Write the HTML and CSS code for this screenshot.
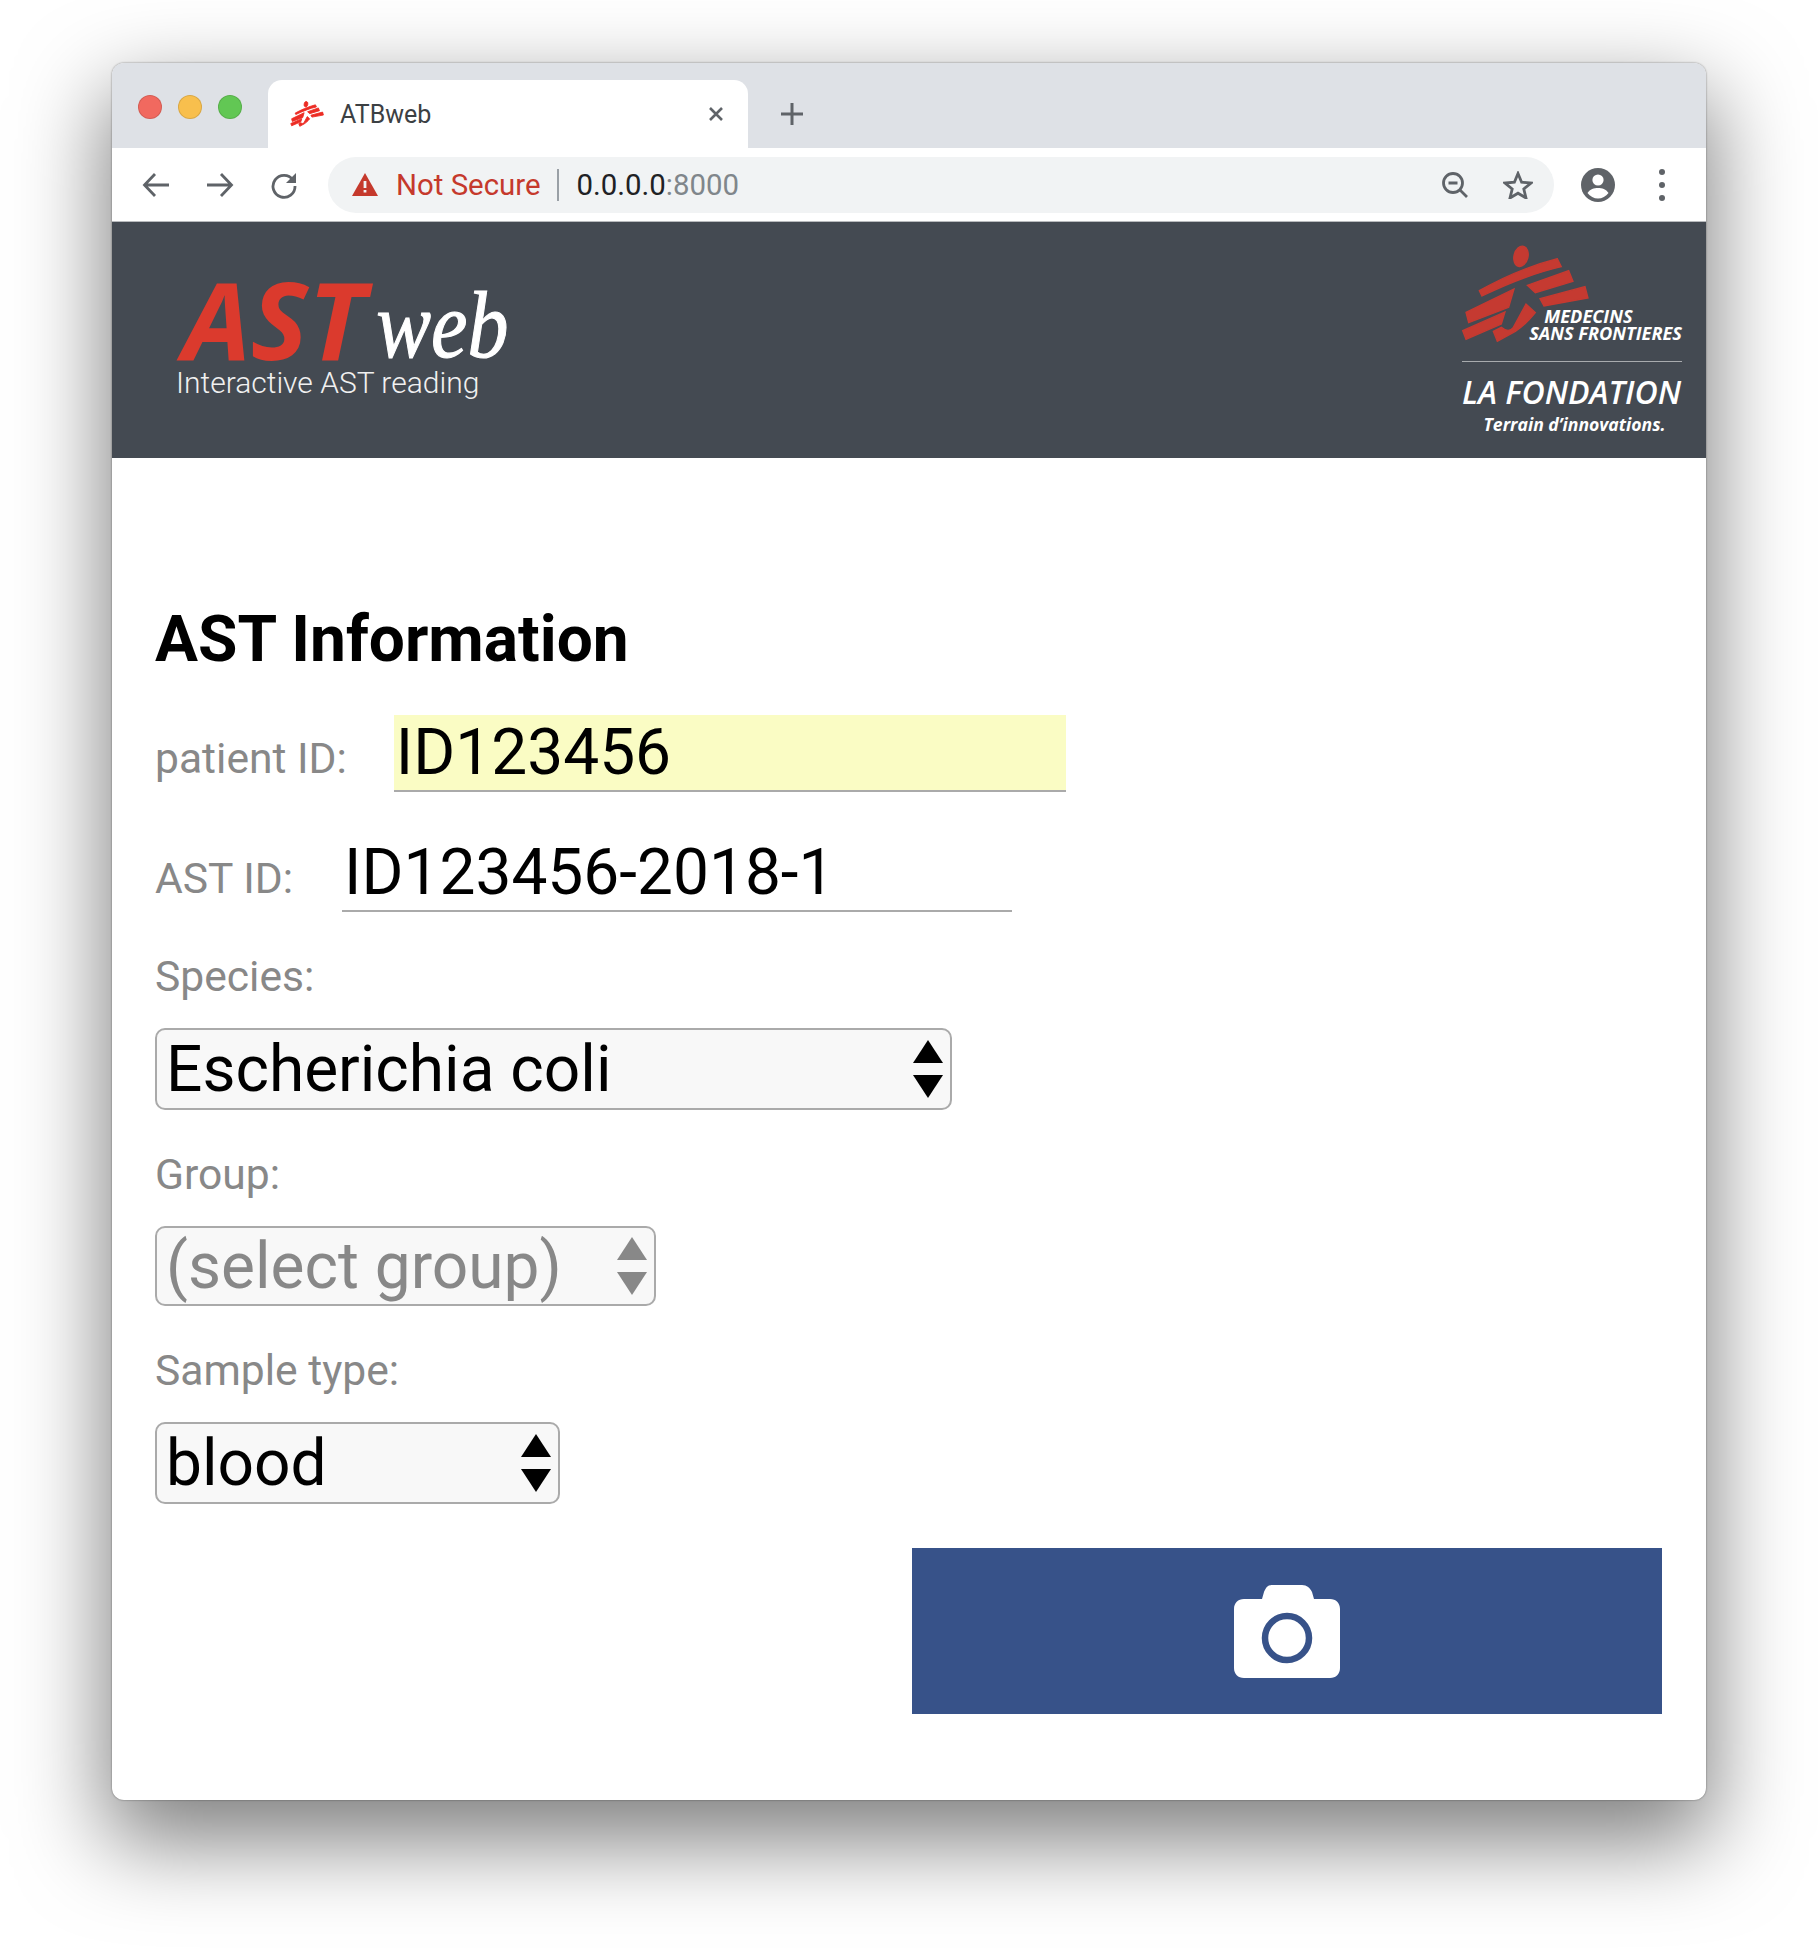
FILE: index.html
```html
<!DOCTYPE html>
<html lang="en">
<head>
    <meta charset="UTF-8">
    <title>ATBweb</title>
    <link rel="stylesheet" href="styles.css">
</head>
<body>
    <svg class="defs" width="0" height="0">
        <symbol id="msf-man" viewBox="60 60 390 300">
            <ellipse cx="243" cy="97" rx="21" ry="31" transform="rotate(14 243 97)"/>
            <path d="M118 200C180 165 270 125 352 104L364 128C290 145 200 180 126 216Z"/>
            <path d="M262 184L386 140L399 172L286 206Z"/>
            <path d="M78 265L222 195L206 250L86 296Z"/>
            <path d="M300 224L435 188L444 222L312 246Z"/>
            <path d="M68 320L195 264L184 300L78 346Z"/>
            <path d="M160 322L184 310C198 322 212 322 220 310L258 240L286 266C262 296 242 312 226 322L172 352Z"/>
        </symbol>
    </svg>

    <div class="window">
        <!-- Tabs -->
        <div class="tabbar">
            <div class="lights">
                <span class="light red"></span>
                <span class="light yellow"></span>
                <span class="light green"></span>
            </div>
            <div class="tab">
                <svg class="favicon"><use href="#msf-man"/></svg>
                <span class="tab-title">ATBweb</span>
                <svg class="tab-close" viewBox="0 0 16 16"><path d="M2 2L14 14M14 2L2 14"/></svg>
            </div>
            <svg class="tab-new" viewBox="0 0 24 24"><path d="M12 1V23M1 12H23"/></svg>
        </div>

        <!-- Toolbar -->
        <div class="toolbar">
            <svg class="tool" viewBox="0 0 28 28"><path d="M27 14H3M13 3L2.5 14L13 25"/></svg>
            <svg class="tool" viewBox="0 0 28 28"><path d="M1 14H25M15 3L25.5 14L15 25"/></svg>
            <svg class="tool" viewBox="0 0 28 28"><path d="M23 9A11 11 0 1 0 25 15"/><path class="solid" d="M26 2V12H16Z"/></svg>
            <div class="omnibox">
                <svg class="warn" viewBox="0 0 26 23"><path d="M13 0L26 23H0Z"/><path class="mark" d="M11.6 8H14.4V15H11.6ZM11.6 17H14.4V19.6H11.6Z"/></svg>
                <span class="not-secure">Not Secure</span>
                <span class="omni-sep"></span>
                <span class="url">0.0.0.0<span class="port">:8000</span></span>
                <svg class="tool zoom-out" viewBox="0 0 28 28"><circle cx="12" cy="12" r="9.5"/><path d="M19 19L26 26M7.5 12H16.5"/></svg>
                <svg class="tool star" viewBox="0 0 30 28"><path d="M15 2.5L18.6 11.2L28 12L20.8 18L23 27L15 22.2L7 27L9.2 18L2 12L11.4 11.2Z"/></svg>
            </div>
            <svg class="account" viewBox="0 0 34 34">
                <circle cx="17" cy="17" r="17"/>
                <circle class="cut" cx="17" cy="12" r="5.6"/>
                <path class="cut" d="M6.5 25C9 21 13 20 17 20S25 21 27.5 25C25 28.5 21 30.5 17 30.5S9 28.5 6.5 25Z"/>
            </svg>
            <div class="menu-dots"><span></span><span></span><span></span></div>
        </div>

        <!-- Encabezado -->
        <header class="site-header">
            <div class="brand">
                <div class="brand-name"><span class="brand-ast">AST</span><span class="brand-web">web</span></div>
                <div class="brand-sub">Interactive AST reading</div>
            </div>
            <div class="msf">
                <div class="msf-top">
                    <svg class="msf-man"><use href="#msf-man"/></svg>
                    <div class="msf-name">
                        <span class="msf-line1">MEDECINS</span>
                        <span class="msf-line2">SANS FRONTIERES</span>
                    </div>
                </div>
                <div class="msf-rule"></div>
                <div class="msf-fond">LA FONDATION</div>
                <div class="msf-tag">Terrain d’innovations.</div>
            </div>
        </header>

        <!-- Formulario -->
        <main class="content">
            <h1>AST Information</h1>

            <div class="field-row first">
                <label for="patient">patient ID:</label>
                <input class="text-input filled" id="patient" type="text" value="ID123456">
            </div>
            <div class="field-row second">
                <label for="astid">AST ID:</label>
                <input class="text-input" id="astid" type="text" value="ID123456-2018-1">
            </div>

            <label class="stack-label" for="species">Species:</label>
            <div class="select-wrap species">
                <select id="species"><option>Escherichia coli</option></select>
                <span class="arrows"></span>
            </div>

            <label class="stack-label" for="group">Group:</label>
            <div class="select-wrap group disabled">
                <select id="group"><option>(select group)</option></select>
                <span class="arrows"></span>
            </div>

            <label class="stack-label" for="sample">Sample type:</label>
            <div class="select-wrap sample">
                <select id="sample"><option>blood</option></select>
                <span class="arrows"></span>
            </div>

            <div class="actions">
                <button class="camera-btn" aria-label="Take picture">
                    <svg viewBox="0 0 106 93">
                        <path fill-rule="evenodd" d="M38 0H68C73 0 76 3 78 7L80 14H96C102 14 106 18 106 24V83C106 89 102 93 96 93H10C4 93 0 89 0 83V24C0 18 4 14 10 14H28L30 7C32 3 33 0 38 0Z"/>
                        <circle class="lens" cx="53" cy="53" r="22"/>
                    </svg>
                </button>
            </div>
        </main>
    </div>
</body>
</html>
```

FILE: styles.css
```css
html, body {
    margin: 0;
    height: 100%;
}

body {
    width: 1818px;
    height: 1960px;
    box-sizing: border-box;
    padding: 63px 112px 0;
    background-color: white;
    font-family: Roboto, "Liberation Sans", sans-serif;
    overflow: hidden;
}

.defs {
    position: absolute;
}

.window {
    width: 1594px;
    height: 1737px;
    border-radius: 12px;
    overflow: hidden;
    background-color: white;
    box-shadow: 0 36px 88px 6px rgba(0, 0, 0, 0.5), 0 0 2px rgba(0, 0, 0, 0.5);
    display: flex;
    flex-direction: column;
}

/* Tabs */
.tabbar {
    height: 85px;
    background-color: #dee1e6;
    display: flex;
    align-items: flex-end;
}

.lights {
    display: flex;
    gap: 16px;
    padding: 0 26px;
    height: 53px;
    width: 156px;
    box-sizing: border-box;
}

.light {
    width: 24px;
    height: 24px;
    border-radius: 50%;
    box-sizing: border-box;
    border: 1px solid rgba(0, 0, 0, 0.12);
}

.red { background-color: #f1695f; }
.yellow { background-color: #f8bf4d; }
.green { background-color: #62c754; }

.tab {
    width: 480px;
    height: 68px;
    background-color: white;
    border-radius: 14px 14px 0 0;
    display: flex;
    align-items: center;
    padding: 0 24px 0 22px;
    box-sizing: border-box;
}

.favicon {
    width: 34px;
    height: 26px;
    fill: #ec2c24;
    stroke: #ec2c24;
    stroke-width: 10;
    flex: none;
}

.tab-title {
    margin-left: 16px;
    font-size: 25px;
    color: #3c4043;
    flex: 1;
}

.tab-close {
    width: 16px;
    height: 16px;
    fill: none;
    stroke: #5f6368;
    stroke-width: 2.6;
}

.tab-new {
    width: 24px;
    height: 24px;
    margin: 0 0 22px 32px;
    fill: none;
    stroke: #5f6368;
    stroke-width: 3;
}

/* Toolbar */
.toolbar {
    height: 74px;
    display: flex;
    align-items: center;
    padding-left: 30px;
    box-sizing: border-box;
    border-bottom: 1px solid #b8babd;
}

.tool {
    width: 28px;
    height: 28px;
    margin-right: 36px;
    flex: none;
    fill: none;
    stroke: #5f6368;
    stroke-width: 2.8;
}

.tool .solid {
    fill: #5f6368;
    stroke: none;
}

.omnibox {
    width: 1226px;
    height: 56px;
    margin-left: -6px;
    border-radius: 28px;
    background-color: #f1f3f4;
    display: flex;
    align-items: center;
    padding-left: 24px;
    box-sizing: border-box;
}

.warn {
    width: 26px;
    height: 23px;
    fill: #c5392c;
    flex: none;
}

.warn .mark {
    fill: #f1f3f4;
}

.not-secure {
    margin-left: 18px;
    font-size: 29.4px;
    color: #c5392c;
}

.omni-sep {
    width: 2px;
    height: 32px;
    margin: 0 18px 0 16px;
    background-color: #9aa0a6;
}

.url {
    font-size: 29.4px;
    color: #202124;
    flex: 1;
}

.port {
    color: #80868b;
}

.zoom-out {
    margin-right: 34px;
}

.star {
    margin-right: 21px;
    width: 30px;
}

.account {
    width: 34px;
    height: 34px;
    margin-left: 27px;
    fill: #5f6368;
    flex: none;
}

.account .cut {
    fill: white;
}

.menu-dots {
    margin-left: 44px;
    display: flex;
    flex-direction: column;
    gap: 7px;
}

.menu-dots span {
    width: 6px;
    height: 6px;
    border-radius: 50%;
    background-color: #5f6368;
}

/* Encabezado */
.site-header {
    height: 236px;
    background-color: #444a52;
    display: flex;
    justify-content: space-between;
    flex: none;
}

.brand {
    padding: 47px 0 0 64px;
}

.brand-name {
    height: 92px;
    white-space: nowrap;
}

.brand-ast {
    display: inline-block;
    line-height: 92px;
    margin: 4px 0 0 7px;
    font-family: "Open Sans", sans-serif;
    font-style: italic;
    font-weight: 700;
    font-size: 108px;
    color: #db3a2d;
}

.brand-web {
    display: inline-block;
    line-height: 92px;
    font-family: "Liberation Serif", serif;
    font-style: italic;
    font-size: 82px;
    color: white;
    -webkit-text-stroke: 1px white;
    margin-left: 11px;
    transform: translateY(-7px) scaleY(1.15);
}

.brand-sub {
    font-size: 30px;
    line-height: 36px;
    font-weight: 300;
    color: #f0f0f0;
    margin-top: 4px;
}

.msf {
    width: 220px;
    margin-right: 24px;
    padding-top: 22px;
    color: white;
    font-family: "Open Sans", sans-serif;
    font-style: italic;
    font-weight: 700;
}

.msf-top {
    position: relative;
    height: 117px;
}

.msf-man {
    width: 130px;
    height: 100px;
    margin-left: -2px;
    fill: #c53a31;
    stroke: #c53a31;
    stroke-width: 4;
}

.msf-name {
    position: absolute;
    right: 0;
    top: 64px;
    font-size: 18.2px;
    line-height: 17px;
    white-space: nowrap;
}

.msf-line1,
.msf-line2 {
    display: block;
}

.msf-line1 {
    padding-left: 15px;
}

.msf-rule {
    height: 1px;
    background-color: #a8abae;
}

.msf-fond {
    font-size: 32px;
    font-weight: 600;
    margin-top: 11px;
    line-height: 38px;
    white-space: nowrap;
}

.msf-tag {
    font-size: 17.6px;
    font-weight: 700;
    text-align: center;
    padding-left: 5px;
    margin-top: 1px;
}

/* Formulario */
.content {
    padding: 0 44px 0 43px;
    flex: 1;
}

h1 {
    font-size: 64px;
    font-weight: 700;
    line-height: 72px;
    margin: 146px 0 0;
    color: black;
}

.field-row {
    display: flex;
    align-items: flex-end;
}

.field-row.first {
    margin-top: 39px;
}

.field-row.second {
    margin-top: 43px;
}

label {
    font-size: 42.6px;
    color: #888;
    line-height: 50px;
}

.field-row label {
    margin-bottom: 9px;
}

.text-input {
    font-family: inherit;
    font-size: 64px;
    color: black;
    border: none;
    border-bottom: 2px solid #aaa;
    background: transparent;
    height: 77px;
    padding: 0 2px;
    box-sizing: border-box;
    outline: none;
}

.first .text-input {
    width: 672px;
    margin-left: 47px;
    background-color: #fafcc4;
}

.second .text-input {
    width: 670px;
    margin-left: 49px;
}

.stack-label {
    display: block;
    margin-top: 39px;
}

.select-wrap {
    position: relative;
    margin-top: 26px;
    height: 82px;
}

.species {
    width: 797px;
    margin-top: 27px;
}

.select-wrap select {
    appearance: none;
    -webkit-appearance: none;
    display: block;
    width: 100%;
    height: 100%;
    box-sizing: border-box;
    border: 2px solid #aaa;
    border-radius: 10px;
    background-color: #f8f8f8;
    font-family: inherit;
    font-size: 64px;
    color: black;
    padding: 0 9px;
    opacity: 1;
}

.group { width: 501px; height: 80px; margin-top: 27px; }
.sample { width: 405px; margin-top: 27px; }

.disabled select {
    color: #888;
}

/* flechas del select, encima del control */
.arrows {
    position: absolute;
    right: 9px;
    top: 50%;
    width: 30px;
    height: 58px;
    margin-top: -29px;
}

.arrows::before,
.arrows::after {
    content: "";
    position: absolute;
    left: 0;
    border-left: 15px solid transparent;
    border-right: 15px solid transparent;
}

.arrows::before {
    top: 0;
    border-bottom: 23px solid black;
}

.arrows::after {
    bottom: 0;
    border-top: 23px solid black;
}

.disabled .arrows::before { border-bottom-color: #888; }
.disabled .arrows::after { border-top-color: #888; }

.actions {
    display: flex;
    justify-content: flex-end;
    margin-top: 44px;
}

.camera-btn {
    width: 750px;
    height: 166px;
    border: none;
    padding: 0;
    background-color: #375289;
    display: flex;
    align-items: center;
    justify-content: center;
}

.camera-btn svg {
    width: 106px;
    height: 93px;
    fill: white;
}

.camera-btn .lens {
    fill: none;
    stroke: #375289;
    stroke-width: 6.5;
}
```
